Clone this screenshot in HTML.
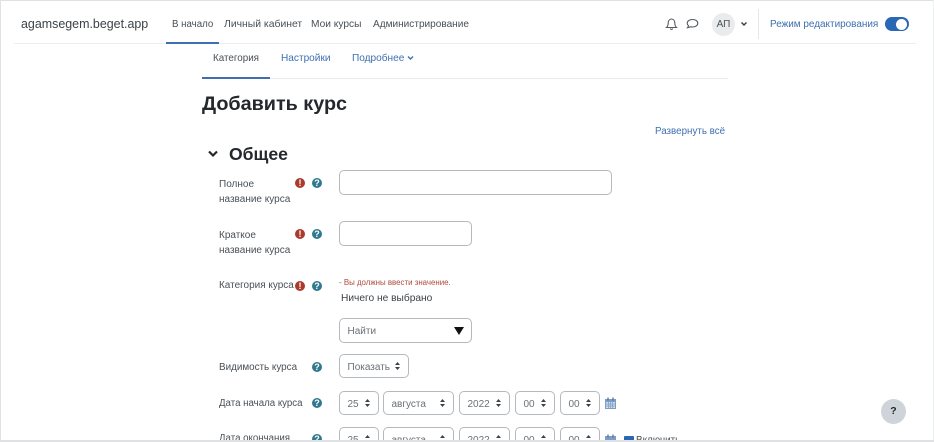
<!DOCTYPE html>
<html lang="ru"><head><meta charset="utf-8"><style>
html,body{margin:0;padding:0;background:#fff}
#p{position:relative;width:934px;height:442px;overflow:hidden;background:#fff;font-family:"Liberation Sans",sans-serif;color:#495057;font-size:10px}
.t{position:absolute;white-space:nowrap;line-height:14px}
.b{position:absolute;background:#fff;border:1px solid #b4b9bd;border-radius:5px;box-sizing:border-box;height:25px;color:#6a7178;font-size:10px;line-height:25px;padding-left:7.5px}
.b svg{position:absolute;top:7px;right:8px}
.s{height:24px}
.e,.q{position:absolute;width:10px;height:10px;border-radius:50%;color:#fff;font-size:9px;font-weight:bold;line-height:10px;text-align:center}
.e{background:#a93a2c}.q{background:#30788f}
.r{position:absolute;background:#dfe1e3}
</style></head><body><div id="p">
<div class="r" style="left:0;top:0;width:934px;height:1px"></div>
<div class="r" style="left:0;top:0;width:1px;height:442px"></div>
<div class="r" style="left:933px;top:0;width:1px;height:442px;background:#eef0f1"></div>
<div class="r" style="left:14px;top:43px;width:902px;height:1px;background:#eceef0"></div>

<div class="t" style="left:21px;top:17px;font-size:12.45px;color:#3c4248">agamsegem.beget.app</div>
<div class="t" style="left:172px;top:18px;font-size:9.7px">В начало</div>
<div class="r" style="left:166px;top:42px;width:53px;height:2px;background:#3f6fb0"></div>
<div class="t" style="left:224px;top:18px;font-size:10.4px">Личный кабинет</div>
<div class="t" style="left:311px;top:18px;font-size:10.2px">Мои курсы</div>
<div class="t" style="left:373px;top:18px;font-size:10.07px">Администрирование</div>

<svg style="position:absolute;left:665px;top:17px" width="13" height="14" viewBox="0 0 13 14" fill="none" stroke="#555b61" stroke-width="1.1"><path d="M1.500 10.500h10c-1.300-1-1.600-2.400-1.700-4.400C9.700 3.700 8.500 2 6.500 2S3.300 3.700 3.200 6.100C3.100 8.100 2.800 9.500 1.500 10.500zM5.300 11.500c.3 1.200 2.100 1.200 2.400 0"/></svg>
<svg style="position:absolute;left:686px;top:18px" width="13" height="12" viewBox="0 0 13 12" fill="none" stroke="#555b61" stroke-width="1.1"><path d="M6.500 1.500C3.500 1.500 1.200 3.100 1.200 5.200c0 1 .5 1.800 1.300 2.400-.1.900-.6 1.700-1 2.100 1.200-.1 2.200-.5 2.900-1 .6.200 1.300.3 2.100.3 3 0 5.300-1.700 5.300-3.800S9.500 1.500 6.500 1.500z"/></svg>
<div style="position:absolute;left:712px;top:13px;width:23px;height:23px;border-radius:50%;background:#e9ebed;font-size:10px;line-height:23px;text-align:center;color:#495057">АП</div>
<svg style="position:absolute;left:740px;top:21px" width="8" height="6" viewBox="0 0 8 6" fill="none" stroke="#3c4248" stroke-width="1.5"><path d="M1.500 1.500L4 4l2.500-2.500"/></svg>
<div class="r" style="left:758px;top:9px;width:1px;height:30px;background:#e4e6e8"></div>
<div class="t" style="left:770px;top:18px;font-size:9.95px;color:#3f6fb0">Режим редактирования</div>
<div style="position:absolute;left:885px;top:17px;width:24px;height:14px;border-radius:7px;background:#2a67b5"></div>
<div style="position:absolute;left:896px;top:18.5px;width:11px;height:11px;border-radius:50%;background:#fff"></div>

<div class="t" style="left:213px;top:52px;font-size:9.85px">Категория</div>
<div class="t" style="left:281px;top:52px;font-size:10.1px;color:#3f6fb0">Настройки</div>
<div class="t" style="left:352px;top:52px;font-size:10.1px;color:#3f6fb0">Подробнее</div>
<svg style="position:absolute;left:407px;top:55px" width="7" height="6" viewBox="0 0 7 6" fill="none" stroke="#3f6fb0" stroke-width="1.4"><path d="M1 1.500l2.500 2.500L6 1.500"/></svg>
<div class="r" style="left:202px;top:78px;width:526px;height:1px;background:#e9ebed"></div>
<div class="r" style="left:202px;top:77px;width:68px;height:2px;background:#3f6fb0"></div>

<div class="t" style="left:202px;top:92px;font-size:19.8px;line-height:24px;font-weight:bold;color:#24282c">Добавить курс</div>
<div class="t" style="left:655px;top:125px;font-size:9.8px;color:#3f6fb0">Развернуть всё</div>
<svg style="position:absolute;left:208px;top:150px" width="10" height="8" viewBox="0 0 10 8" fill="none" stroke="#24282c" stroke-width="2.2"><path d="M1 1.500l4 4 4-4"/></svg>
<div class="t" style="left:229px;top:144px;font-size:17.6px;line-height:20px;font-weight:bold;color:#24282c">Общее</div>

<div class="t" style="left:219px;top:176px;font-size:10px;line-height:15.5px;padding-top:0.5px">Полное<br>название курса</div>
<div class="e" style="left:295px;top:178px">!</div><div class="q" style="left:312px;top:178px">?</div>
<div class="b" style="left:339px;top:170px;width:273px"></div>

<div class="t" style="left:219px;top:227px;font-size:10px;line-height:15.5px;padding-top:0.5px">Краткое<br>название курса</div>
<div class="e" style="left:295px;top:229px">!</div><div class="q" style="left:312px;top:229px">?</div>
<div class="b" style="left:339px;top:221px;width:133px"></div>

<div class="t" style="left:219px;top:279px;font-size:9.97px">Категория курса</div>
<div class="e" style="left:295px;top:281px">!</div><div class="q" style="left:312px;top:281px">?</div>
<div class="t" style="left:339px;top:276px;font-size:7.9px;color:#b0493c">- Вы должны ввести значение.</div>
<div class="t" style="left:341px;top:292px;font-size:10.2px;color:#3c4248">Ничего не выбрано</div>
<div class="b" style="left:339px;top:318px;width:133px">Найти<svg style="top:8px;right:7px" width="10" height="8" viewBox="0 0 10 8"><path d="M0 0h10L5 8z" fill="#111"/></svg></div>

<div class="t" style="left:219px;top:361px;font-size:9.87px">Видимость курса</div>
<div class="q" style="left:312px;top:362px">?</div>
<div class="b s" style="left:339px;top:354px;width:70px">Показать<svg width="5" height="8" viewBox="0 0 5 8"><path d="M2.500 0L5 3H0zM2.500 8L0 5h5z" fill="#3c4248"/></svg></div>

<div class="t" style="left:219px;top:397px;font-size:9.7px">Дата начала курса</div>
<div class="q" style="left:312px;top:398px">?</div>
<div class="b s" style="left:339px;top:391px;width:40px">25<svg width="5" height="8" viewBox="0 0 5 8"><path d="M2.500 0L5 3H0zM2.500 8L0 5h5z" fill="#3c4248"/></svg></div>
<div class="b s" style="left:383px;top:391px;width:71px">августа<svg width="5" height="8" viewBox="0 0 5 8"><path d="M2.500 0L5 3H0zM2.500 8L0 5h5z" fill="#3c4248"/></svg></div>
<div class="b s" style="left:459px;top:391px;width:51px">2022<svg width="5" height="8" viewBox="0 0 5 8"><path d="M2.500 0L5 3H0zM2.500 8L0 5h5z" fill="#3c4248"/></svg></div>
<div class="b s" style="left:515px;top:391px;width:40px">00<svg width="5" height="8" viewBox="0 0 5 8"><path d="M2.500 0L5 3H0zM2.500 8L0 5h5z" fill="#3c4248"/></svg></div>
<div class="b s" style="left:560px;top:391px;width:40px">00<svg width="5" height="8" viewBox="0 0 5 8"><path d="M2.500 0L5 3H0zM2.500 8L0 5h5z" fill="#3c4248"/></svg></div>
<svg style="position:absolute;left:605px;top:397px" width="11" height="12" viewBox="0 0 11 12"><path d="M0 2h11v10H0z" fill="#7d9cc6"/><path d="M1 5h9v6H1z" fill="#cfdcec"/><path d="M3 .5v3M8 .5v3" stroke="#4a6a9a" stroke-width="1.2"/><path d="M1 7h9M1 9h9M3.500 5v6M5.500 5v6M7.500 5v6" stroke="#7d9cc6" stroke-width=".7"/></svg>

<div class="t" style="left:219px;top:432px;font-size:9.7px">Дата окончания</div>
<div class="q" style="left:312px;top:434px">?</div>
<div class="b s" style="left:339px;top:427px;width:40px">25<svg width="5" height="8" viewBox="0 0 5 8"><path d="M2.500 0L5 3H0zM2.500 8L0 5h5z" fill="#3c4248"/></svg></div>
<div class="b s" style="left:383px;top:427px;width:71px">августа<svg width="5" height="8" viewBox="0 0 5 8"><path d="M2.500 0L5 3H0zM2.500 8L0 5h5z" fill="#3c4248"/></svg></div>
<div class="b s" style="left:459px;top:427px;width:51px">2022<svg width="5" height="8" viewBox="0 0 5 8"><path d="M2.500 0L5 3H0zM2.500 8L0 5h5z" fill="#3c4248"/></svg></div>
<div class="b s" style="left:515px;top:427px;width:40px">00<svg width="5" height="8" viewBox="0 0 5 8"><path d="M2.500 0L5 3H0zM2.500 8L0 5h5z" fill="#3c4248"/></svg></div>
<div class="b s" style="left:560px;top:427px;width:40px">00<svg width="5" height="8" viewBox="0 0 5 8"><path d="M2.500 0L5 3H0zM2.500 8L0 5h5z" fill="#3c4248"/></svg></div>
<svg style="position:absolute;left:605px;top:434px" width="11" height="12" viewBox="0 0 11 12"><path d="M0 2h11v10H0z" fill="#7d9cc6"/><path d="M3 .5v3M8 .5v3" stroke="#4a6a9a" stroke-width="1.2"/></svg>
<div style="position:absolute;left:624px;top:436px;width:10px;height:10px;background:#2a67b5;border-radius:1px"></div>
<div class="t" style="left:636px;top:434px;font-size:9.9px">Включить</div>
<div class="r" style="left:0;top:440px;width:934px;height:2px"></div>

<div style="position:absolute;left:881px;top:399px;width:25px;height:25px;border-radius:50%;background:#ced4da;color:#24282c;font-size:10.5px;font-weight:bold;line-height:25px;text-align:center">?</div>
</div></body></html>
